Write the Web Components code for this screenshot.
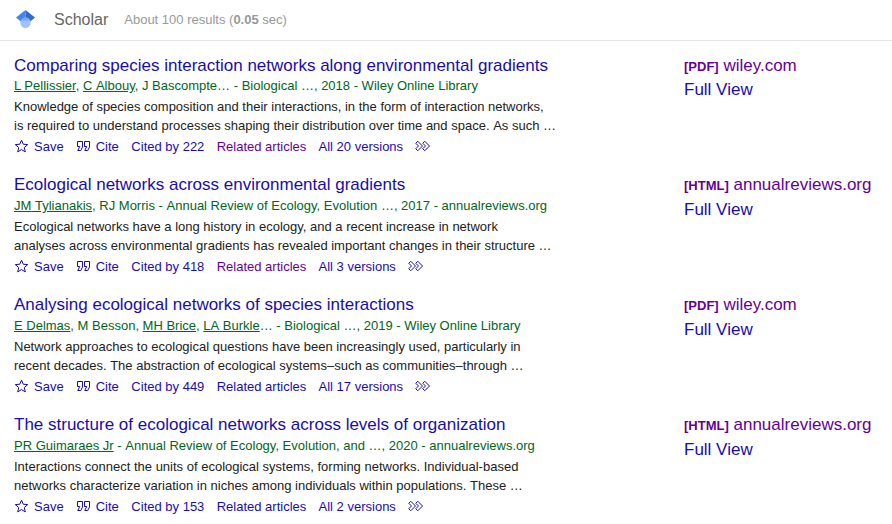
<!DOCTYPE html>
<html lang="en">
<head>
<meta charset="utf-8">
<title>Scholar</title>
<style>
html, body { margin: 0; height: 524px; overflow: hidden; background: #fff; }
body { font-family: "Liberation Sans", Arial, sans-serif; font-size: 13px; color: #222; }
</style>
</head>
<body>
<scholar-app></scholar-app>
<script>
const LINK = 'color:#1a0dab', VISITED = 'color:#609';

class ScholarIcon extends HTMLElement {
  connectedCallback() {
    const shapes = {
      star: 'M7.5 11.57l3.824 2.308-1.015-4.35 3.379-2.926-4.45-.378L7.5 2.122 5.761 6.224l-4.449.378 3.379 2.926-1.015 4.35z',
      cite: 'M6.5 3.5H1.5V8.5H3.75L1.75 12.5H4.75L6.5 9V3.5zM13.5 3.5H8.5V8.5H10.75L8.75 12.5H11.75L13.5 9V3.5z',
      more: 'M0.75 5.25l2-2 4.75 4.75-4.75 4.75-2-2 2.75-2.75zM7.75 5.25l2-2 4.75 4.75-4.75 4.75-2-2 2.75-2.75z'
    };
    this.attachShadow({ mode: 'open' }).innerHTML = `
      <style>:host{display:block;width:15px;height:16px;flex:none} svg{display:block;overflow:visible} path{fill:none;stroke:#1a0dab}</style>
      <svg width="15" height="16" viewBox="0 0 15 16"><path d="${shapes[this.getAttribute('name')]}"/></svg>`;
  }
}
customElements.define('scholar-icon', ScholarIcon);

class ScholarHeader extends HTMLElement {
  connectedCallback() {
    this.attachShadow({ mode: 'open' }).innerHTML = `
      <style>
        :host{display:flex;align-items:center;box-sizing:border-box;height:41px;padding:0 0 1px 16px;border-bottom:1px solid #e5e5e5}
        svg{display:block;flex:none;margin-top:-1px}
        .name{font-size:16px;line-height:20px;color:#666;margin-left:19px}
        .stats{color:#999;line-height:20px;margin-left:16px}
      </style>
      <svg width="19" height="18" viewBox="0 0 19 18">
        <path fill="#4285f4" d="M9.5 0L0 7.6l5 4.1h4.5z"/>
        <path fill="#356ac3" d="M9.5 0L19 7.6l-5 4.1H9.5z"/>
        <circle cx="9.5" cy="12.7" r="5.2" fill="#a0c3ff"/>
        <path fill="#76a7fa" d="M4.8 10.4a5.2 5.2 0 0 1 9.4 0z"/>
      </svg>
      <span class="name"><slot name="name"></slot></span>
      <span class="stats"><slot></slot></span>`;
  }
}
customElements.define('scholar-header', ScholarHeader);

class ScholarActions extends HTMLElement {
  connectedCallback() {
    this.attachShadow({ mode: 'open' }).innerHTML = `
      <style>
        :host{display:flex;align-items:center;height:19px;line-height:19px;color:#1a0dab;white-space:nowrap}
        .icon{display:flex;align-items:center;gap:5px}
        scholar-icon{height:17px}
        .save{margin-right:12px} .cite{margin-right:12.6px}
        .t{margin-right:12.3px}
        .t:last-of-type{margin-right:12px}
      </style>
      <span class="icon save"><scholar-icon name="star"></scholar-icon><span>Save</span></span>
      <span class="icon cite"><scholar-icon name="cite"></scholar-icon><span>Cite</span></span>
      <span class="t">Cited by ${this.getAttribute('cited')}</span>
      <span class="t" style="${this.hasAttribute('visited') ? VISITED : LINK}">Related articles</span>
      <span class="t">All ${this.getAttribute('versions')} versions</span>
      <scholar-icon name="more"></scholar-icon>`;
  }
}
customElements.define('scholar-actions', ScholarActions);

class ScholarResult extends HTMLElement {
  connectedCallback() {
    const a = n => this.getAttribute(n);
    this.attachShadow({ mode: 'open' }).innerHTML = `
      <style>
        :host{display:grid;grid-template-columns:670px 1fr;height:102px;white-space:nowrap}
        h3{margin:0 0 1px;font-size:17px;font-weight:400;line-height:21px;height:21px;color:#1a0dab;padding-top:var(--nudge,0px);box-sizing:border-box}
        .by{color:#006621;line-height:19px;height:19px;margin-bottom:2px}
        .text{line-height:19px;height:38px;margin-bottom:2px}
        .side{font-size:17px;color:#1a0dab}
        .src{line-height:21px;height:23px;color:#609;padding-top:var(--nudge,0px);box-sizing:border-box}
        .src b{font-size:13px}
        .view{line-height:25px;height:25px}
      </style>
      <div>
        <h3>${a('heading')}</h3>
        <div class="by"><slot name="by"></slot></div>
        <div class="text"><slot name="text"></slot></div>
        <slot name="actions"></slot>
      </div>
      <div class="side">
        <div class="src"><b>[${a('kind')}]</b> ${a('site')}</div>
        <div class="view">Full View</div>
      </div>`;
  }
}
customElements.define('scholar-result', ScholarResult);

// Keeps capital A and T from being kerned against a neighbouring space.
const loose = s => s.replace(/ (?=[AT])|(?<=A) /g, '<i> </i>');

class ScholarApp extends HTMLElement {
  connectedCallback() {
    const data = [
      ['Comparing species interaction networks along environmental gradients', '<u>L Pellissier</u>, <u>C Albouy</u>, J Bascompte… - Biological …, 2018 - Wiley Online Library', 'Knowledge of species composition and their interactions, in the form of interaction networks,<br>is required to understand processes shaping their distribution over time and space. As such …', 222, 20, 'visited', 'PDF', 'wiley.com'],
      ['Ecological networks across environmental gradients', '<u>JM Tylianakis</u>, RJ Morris - Annual Review of Ecology, Evolution …, 2017 - annualreviews.org', 'Ecological networks have a long history in ecology, and a recent increase in network<br>analyses across environmental gradients has revealed important changes in their structure …', 418, 3, 'visited', 'HTML', 'annualreviews.org'],
      ['Analysing ecological networks of species interactions', '<u>E Delmas</u>, M Besson, <u>MH Brice</u>, <u>LA Burkle</u>… - Biological …, 2019 - Wiley Online Library', 'Network approaches to ecological questions have been increasingly used, particularly in<br>recent decades. The abstraction of ecological systems–such as communities–through …', 449, 17, '', 'PDF', 'wiley.com'],
      ['The structure of ecological networks across levels of organization', '<u>PR Guimaraes Jr</u> - Annual Review of Ecology, Evolution, and …, 2020 - annualreviews.org', 'Interactions connect the units of ecological systems, forming networks. Individual-based<br>networks characterize variation in niches among individuals within populations. These …', 153, 2, '', 'HTML', 'annualreviews.org']
    ];
    this.attachShadow({ mode: 'open' }).innerHTML = `
      <style>
        :host{display:block}
        main{display:flex;flex-direction:column;gap:18px;padding:13px 0 0 14px}
        scholar-result:first-child{--nudge:1px}
        i{font-style:normal;padding:0 .02px}
      </style>
      <scholar-header><span slot="name">Scholar</span>About 100 results (<b>0.05</b> sec)</scholar-header>
      <main>${data.map(([t, by, text, c, v, vis, k, s]) => `<scholar-result heading="${t}" kind="${k}" site="${s}"><span slot="by">${loose(by)}</span><span slot="text">${loose(text)}</span><scholar-actions slot="actions" cited="${c}" versions="${v}" ${vis}></scholar-actions></scholar-result>`).join('')}</main>`;
  }
}
customElements.define('scholar-app', ScholarApp);
</script>
</body>
</html>
